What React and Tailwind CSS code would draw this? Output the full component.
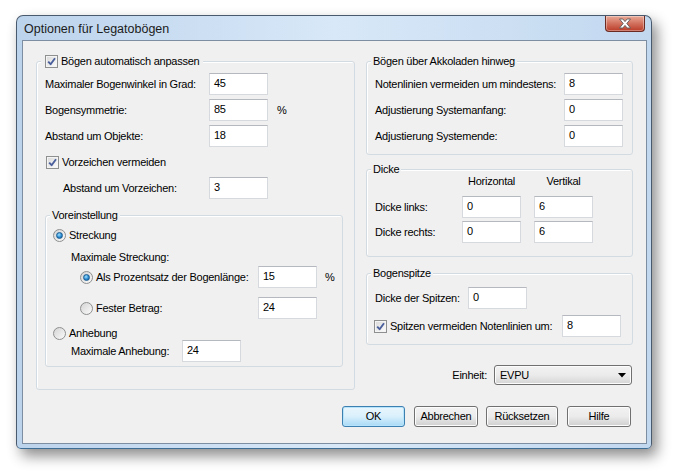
import React from 'react';

const font = { fontFamily: '"Liberation Sans", Arial, sans-serif' };

const Check = ({ checked = true }) => (
  <span className="w-[13px] h-[13px] shrink-0 border border-[#8e8f8f] bg-gradient-to-br from-[#d8d8d8] to-[#fdfdfd] flex items-center justify-center">
    <span className="w-[11px] h-[11px] border border-[#f4f4f4] flex items-center justify-center">
      {checked && (
        <svg width="9" height="9" viewBox="0 0 9 9">
          <path d="M1.2 4.6 L3.6 7.2 L8 1.2" fill="none" stroke="#4a5f9c" strokeWidth="1.9" strokeLinejoin="round" />
        </svg>
      )}
    </span>
  </span>
);

const Radio = ({ checked }) => (
  <span className="w-[13px] h-[13px] shrink-0 rounded-full border border-[#8e8f8f] bg-gradient-to-br from-[#d4d4d4] to-[#fbfbfb] flex items-center justify-center">
    {checked && (
      <span className="w-[7px] h-[7px] rounded-full border border-[#1c5d92] bg-[radial-gradient(circle_at_40%_35%,#9ee0ff_0%,#2a8ad0_55%,#0e4f8c_100%)]" />
    )}
  </span>
);

const Field = ({ value, w = 'w-[59px]' }) => (
  <div className={`${w} h-[22px] shrink-0 bg-white border border-[#d6d9de] border-t-[#b5b8be] pl-[4px] flex items-center text-[11px] leading-none`}>
    <span className="-mt-[2px]">{value}</span>
  </div>
);

const Group = ({ legend, className, children }) => (
  <div className={`relative border border-[#d3dbe2] rounded-[3px] shadow-[inset_1px_1px_0_#fff] ${className}`}>
    <div className="absolute -top-[8px] left-[4px] px-[2px] bg-[#f0f0f0] h-[14px] flex items-center">
      {legend}
    </div>
    {children}
  </div>
);

const Row = ({ label, lw, value, unit, className = '' }) => (
  <div className={`flex items-center h-[22px] ${className}`}>
    <span className={`${lw} shrink-0`}>{label}</span>
    <Field value={value} />
    {unit && <span className="ml-[9px]">{unit}</span>}
  </div>
);

const Button = ({ children, w, primary }) => (
  <div
    className={`${w} h-[21px] rounded-[3px] border flex items-center justify-center text-[11px] ${
      primary
        ? 'border-[#3c7fb1] bg-gradient-to-b from-[#eaf6fd] via-[#d9f0fc] to-[#a7d9f5] shadow-[inset_0_0_0_1px_#b8e4fb]'
        : 'border-[#707070] bg-gradient-to-b from-[#f2f2f2] via-[#ebebeb] to-[#cfcfcf] shadow-[inset_0_0_0_1px_#fcfcfc]'
    }`}
  >
    {children}
  </div>
);

export default function App() {
  return (
    <div className="w-[682px] h-[473px] bg-white pt-[15px] pl-[16px] text-black" style={font}>
      <div className="w-[636px] h-[434px] rounded-t-[7px] rounded-b-[5px] border border-[#4a5a6e] border-b-[#3d6c95] bg-gradient-to-r from-[#bcd3ec] via-[#d8e8f8] to-[#c2d8ef] shadow-[5px_7px_14px_rgba(0,0,0,0.45)] pl-[5px] pr-[4px] pb-[4px] flex flex-col">
        {/* title bar */}
        <div className="h-[24px] flex items-start justify-between">
          <span className="text-[12.5px] ml-[2px] mt-[4px] text-[#1b1b1b]">Optionen für Legatobögen</span>
          <div className="w-[40px] h-[16px] mr-[2px] rounded-b-[4px] border border-t-0 border-[#6b2b22] bg-gradient-to-b from-[#e9a996] via-[#d2705e] to-[#b93a26] flex items-center justify-center shadow-[inset_0_0_0_1px_rgba(255,255,255,0.35)]">
            <svg width="14" height="11" viewBox="0 0 14 11">
              <path d="M1.5 1 H4.8 L7 3.6 L9.2 1 H12.5 L8.8 5.5 L12.5 10 H9.2 L7 7.4 L4.8 10 H1.5 L5.2 5.5 Z" fill="#fff" stroke="#5a5a5a" strokeWidth="0.9" strokeLinejoin="round" />
            </svg>
          </div>
        </div>

        {/* client area */}
        <div className="h-[404px] border border-[#7d8ea3] bg-[#f0f0f0] pt-[20px] pl-[13px] text-[11px] tracking-[-0.25px] whitespace-nowrap">
          <div className="flex gap-[11px] h-[329px]">
            {/* left column */}
            <Group
              className="w-[319px] h-[329px]"
              legend={
                <div className="flex items-center px-[2px]">
                  <Check />
                  <span className="ml-[3px]">Bögen automatisch anpassen</span>
                </div>
              }
            >
              <div className="pt-[11px] pl-[8px] flex flex-col">
                <Row label="Maximaler Bogenwinkel in Grad:" lw="w-[164px]" value="45" />
                <Row label="Bogensymmetrie:" lw="w-[164px]" value="85" unit="%" className="mt-[4px]" />
                <Row label="Abstand um Objekte:" lw="w-[164px]" value="18" className="mt-[4px]" />
                <div className="flex items-center h-[14px] mt-[8px] ml-[1px]">
                  <Check />
                  <span className="ml-[3px]">Vorzeichen vermeiden</span>
                </div>
                <Row label="Abstand um Vorzeichen:" lw="w-[146px]" value="3" className="mt-[8px] ml-[18px]" />

                <Group
                  className="w-[298px] h-[152px] mt-[16px]"
                  legend={<span>Voreinstellung</span>}
                >
                  <div className="pt-[12px] pl-[7px] flex flex-col">
                    <div className="flex items-center h-[14px]">
                      <Radio checked />
                      <span className="ml-[3px]">Streckung</span>
                    </div>
                    <div className="h-[14px] mt-[8px] ml-[18px] flex items-center">Maximale Streckung:</div>
                    <div className="flex items-center h-[22px] mt-[2px] ml-[27px]">
                      <Radio checked />
                      <span className="ml-[3px] w-[162px] shrink-0">Als Prozentsatz der Bogenlänge:</span>
                      <Field value="15" />
                      <span className="ml-[8px]">%</span>
                    </div>
                    <div className="flex items-center h-[22px] mt-[9px] ml-[27px]">
                      <Radio />
                      <span className="ml-[3px] w-[162px] shrink-0">Fester Betrag:</span>
                      <Field value="24" />
                    </div>
                    <div className="flex items-center h-[14px] mt-[7px]">
                      <Radio />
                      <span className="ml-[3px]">Anhebung</span>
                    </div>
                    <Row label="Maximale Anhebung:" lw="w-[111px]" value="24" className="ml-[18px]" />
                  </div>
                </Group>
              </div>
            </Group>

            {/* right column */}
            <div className="w-[267px] flex flex-col">
              <Group className="h-[94px]" legend={<span>Bögen über Akkoladen hinweg</span>}>
                <div className="pt-[11px] pl-[8px] flex flex-col gap-[4px]">
                  <Row label="Notenlinien vermeiden um mindestens:" lw="w-[189px]" value="8" />
                  <Row label="Adjustierung Systemanfang:" lw="w-[189px]" value="0" />
                  <Row label="Adjustierung Systemende:" lw="w-[189px]" value="0" />
                </div>
              </Group>

              <Group className="h-[88px] mt-[14px]" legend={<span>Dicke</span>}>
                <div className="pt-[4px] pl-[8px] flex flex-col">
                  <div className="flex items-center h-[14px]">
                    <span className="w-[87px]" />
                    <span className="w-[59px] text-center">Horizontal</span>
                    <span className="w-[59px] ml-[13px] text-center">Vertikal</span>
                  </div>
                  <div className="flex items-center h-[22px] mt-[8px]">
                    <span className="w-[87px] shrink-0">Dicke links:</span>
                    <Field value="0" />
                    <span className="w-[13px]" />
                    <Field value="6" />
                  </div>
                  <div className="flex items-center h-[22px] mt-[3px]">
                    <span className="w-[87px] shrink-0">Dicke rechts:</span>
                    <Field value="0" />
                    <span className="w-[13px]" />
                    <Field value="6" />
                  </div>
                </div>
              </Group>

              <Group className="h-[72px] mt-[16px]" legend={<span>Bogenspitze</span>}>
                <div className="pt-[13px] pl-[8px] flex flex-col">
                  <Row label="Dicke der Spitzen:" lw="w-[93px]" value="0" />
                  <div className="flex items-center h-[22px] mt-[6px] -ml-[1px]">
                    <Check />
                    <span className="ml-[3px] w-[172px] shrink-0">Spitzen vermeiden Notenlinien um:</span>
                    <Field value="8" />
                  </div>
                </div>
              </Group>

              <div className="flex items-center justify-end mt-[20px] mr-[1px]">
                <span>Einheit:</span>
                <div className="ml-[7px] w-[138px] h-[20px] rounded-[3px] border border-[#707070] bg-gradient-to-b from-[#f2f2f2] via-[#ebebeb] to-[#d5d5d5] shadow-[inset_0_0_0_1px_#fcfcfc] flex items-center justify-between pl-[5px] pr-[5px]">
                  <span>EVPU</span>
                  <svg width="8" height="5" viewBox="0 0 8 5">
                    <path d="M0 0 H8 L4 4.5 Z" fill="#000" />
                  </svg>
                </div>
              </div>
            </div>
          </div>

          {/* buttons */}
          <div className="flex justify-end pr-[15px] mt-[16px]">
            <Button w="w-[63px]" primary>OK</Button>
            <div className="ml-[9px]"><Button w="w-[64px]">Abbrechen</Button></div>
            <div className="ml-[8px]"><Button w="w-[72px]">Rücksetzen</Button></div>
            <div className="ml-[9px]"><Button w="w-[64px]">Hilfe</Button></div>
          </div>
        </div>
      </div>
    </div>
  );
}
